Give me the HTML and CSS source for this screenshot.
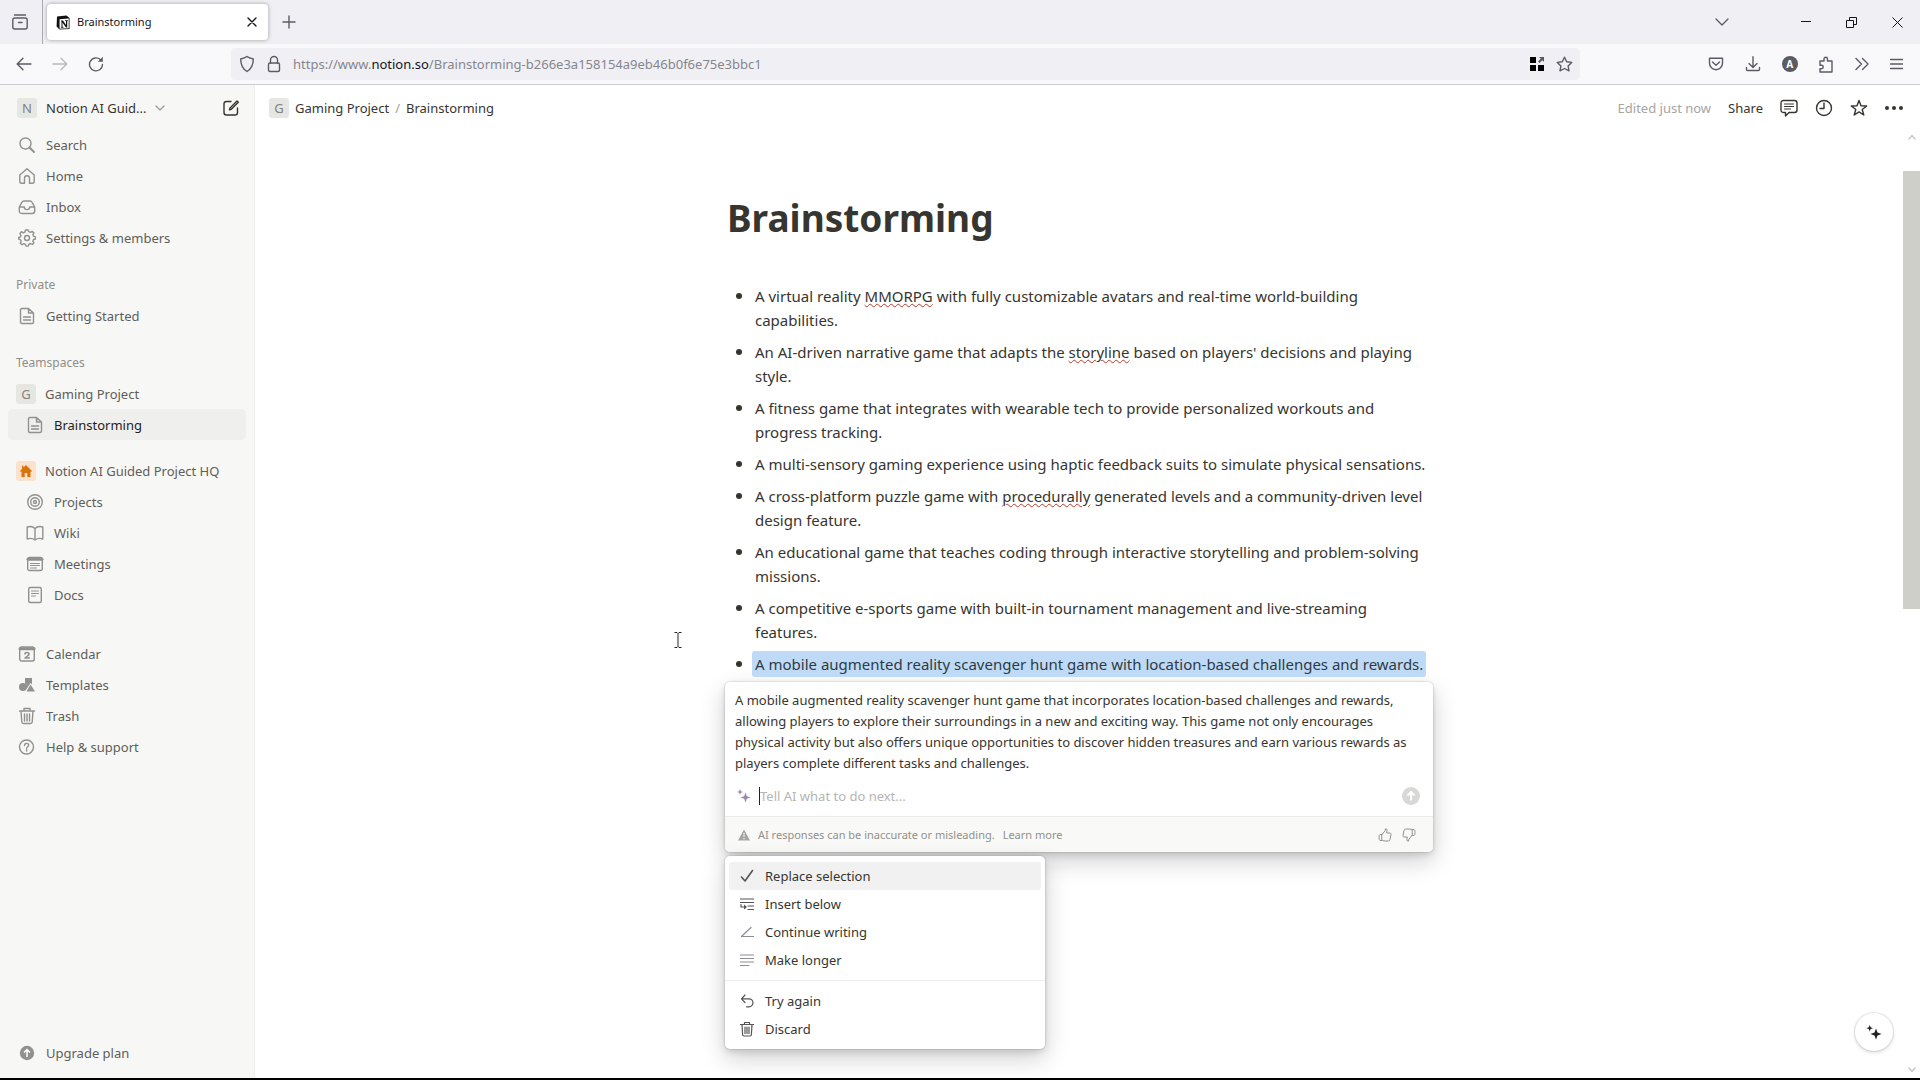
FILE: index.html
```html
<!DOCTYPE html>
<html lang="en">
<head>
<meta charset="utf-8">
<title>Brainstorming</title>
<link rel="stylesheet" href="styles.css">
</head>
<body>
<div class="window">
  <header class="tabbar">
    <button class="tabbar-view" aria-label="Firefox View"><svg class="icon" width="18" height="18" viewBox="0 0 18 18"><rect x="1.800" y="5" width="14.400" height="11" rx="2"/><path d="M3.500 2h11M7.500 9.500h3.500"/></svg></button>
    <div class="tab">
      <svg width="14" height="15" viewBox="0 0 14 15"><path d="M1 1.500 10.500.6 13.500 3v11L3.500 14.500.6 11.500z" fill="#111"/><path d="M3.600 4.200 12.700 3.600v9.600l-9.100.5z" fill="#fff"/><path d="M5 5.500h2l3 4.600V6H9V5.200h2.900V6l-.7.200v6.300H9.900L6.500 7.400v4.400l1 .3v.6H4.900v-.6l.6-.2V6.200H5z" fill="#111"/></svg>
      <span class="tab-title">Brainstorming</span>
      <button aria-label="Close tab"><svg class="icon dark" width="10" height="10" viewBox="0 0 10 10"><path d="m1 1 8 8M9 1 1 9"/></svg></button>
    </div>
    <button class="newtab" aria-label="New tab"><svg class="icon" width="14" height="14" viewBox="0 0 14 14"><path d="M7 1v12M1 7h12"/></svg></button>
    <div class="wincontrols">
      <button aria-label="List all tabs"><svg class="icon" width="14" height="8" viewBox="0 0 14 8"><path d="m1 1 6 6 6-6"/></svg></button>
      <button class="minimize" aria-label="Minimize"><svg class="icon dark thin" width="10" height="10" viewBox="0 0 10 10"><path d="M0 4.500h10"/></svg></button>
      <button aria-label="Restore"><svg class="icon dark thin" width="11" height="11" viewBox="0 0 11 11"><path d="M.5 3.500h7v7h-7zM3.500 3V.5h7v7H8"/></svg></button>
      <button aria-label="Close"><svg class="icon dark thin" width="11" height="11" viewBox="0 0 11 11"><path d="m.5.5 10 10M10.500.5l-10 10"/></svg></button>
    </div>
  </header>

  <nav class="toolbar" aria-label="Browser">
    <div class="navbuttons">
      <button aria-label="Back"><svg class="icon" width="16" height="14" viewBox="0 0 16 14"><path d="M15 7H1.500M7 1.200 1.200 7 7 12.800"/></svg></button>
      <button aria-label="Forward" disabled><svg class="icon" width="16" height="14" viewBox="0 0 16 14"><path d="M1 7h13.500M9 1.200 14.800 7 9 12.800"/></svg></button>
      <button aria-label="Reload"><svg class="icon" width="16" height="16" viewBox="0 0 16 16"><path d="M14.500 8.500a6.500 6.500 0 1 1-2.200-5"/><path d="M14.800.8v5h-5z" fill="currentColor" stroke="none"/></svg></button>
    </div>
    <div class="urlbar">
      <svg class="icon" width="16" height="18" viewBox="0 0 16 18"><path d="M8 1.500c2 1.500 4 2 6.300 2.500 0 6-1.500 9.600-6.300 12.500C3.200 13.600 1.700 10 1.700 4 4 3.500 6 3 8 1.500z"/></svg>
      <svg class="icon" width="14" height="18" viewBox="0 0 14 18"><rect x="1.500" y="8" width="11" height="8.500" rx="1.500"/><path d="M3.500 8V5a3.500 3.500 0 0 1 7 0v3"/></svg>
      <div class="url" role="textbox" aria-label="Address">https://www.<b>notion.so</b>/Brainstorming-b266e3a158154a9eb46b0f6e75e3bbc1</div>
      <svg width="14" height="14" viewBox="0 0 14 14"><path d="M0 0h6v6H0zM0 8h6v6H0zM8 8h6v6H8z"/><path d="M9 0h5v5l-1.700-1.700L9.500 6 8 4.500l2.800-2.700z" fill="#5b5b66"/></svg>
      <svg class="icon" width="17" height="16" viewBox="0 0 17 16"><path d="m8.500 1.200 2.200 4.500 5 .7-3.600 3.500.9 4.900-4.500-2.300L4 14.800l.9-4.900L1.300 6.400l5-.7z"/></svg>
    </div>
    <div class="actions">
      <button aria-label="Pocket"><svg class="icon" width="16" height="16" viewBox="0 0 16 16"><path d="M1.500 2.200h13v5a6.500 6.500 0 0 1-13 0z"/><path d="m4.500 6 3.500 3.200L11.500 6"/></svg></button>
      <button aria-label="Downloads"><svg class="icon" width="16" height="16" viewBox="0 0 16 16"><path d="M8 .8v10.500M4 7.500l4 4 4-4M1.500 11.500v1.800q0 1.200 1.200 1.200h10.600q1.200 0 1.200-1.200v-1.800"/></svg></button>
      <button class="account" aria-label="Account">A</button>
      <button aria-label="Extensions"><svg class="icon" width="16" height="17" viewBox="0 0 16 17"><path d="M2 5h4V3a1.700 1.700 0 0 1 3.500 0v2H14v11H2v-3.200h1.500a1.700 1.700 0 0 0 0-3.500H2z"/></svg></button>
      <button aria-label="More tools"><svg class="icon" width="14" height="14" viewBox="0 0 14 14"><path d="m1 1.500 5.500 5.500L1 12.500M7.500 1.500 13 7l-5.500 5.500"/></svg></button>
      <button aria-label="Menu"><svg class="icon" width="13" height="12" viewBox="0 0 13 12"><path d="M.5 1.500h12M.5 6h12M.5 10.500h12"/></svg></button>
    </div>
  </nav>

  <div class="app">
    <aside class="sidebar">
      <div class="workspace">
        <span class="badge">N</span><span>Notion AI Guid...</span>
        <svg class="icon light" width="10" height="6" viewBox="0 0 10 6"><path d="m1 1 4 4 4-4"/></svg>
        <button class="compose" aria-label="New page"><svg class="icon" width="18" height="18" viewBox="0 0 18 18"><path d="M9 2.500H4.500a2.500 2.500 0 0 0-2.500 2.500v8.500A2.500 2.500 0 0 0 4.500 16H13a2.500 2.500 0 0 0 2.500-2.500V9M7.500 10.800 8 9l7-7 1.300 1.300-7 7z"/></svg></button>
      </div>
      <nav class="nav">
        <a href="#"><svg class="icon" width="18" height="18" viewBox="0 0 18 18"><circle cx="7.500" cy="7.500" r="5.500"/><path d="m11.500 11.500 4.500 4.500" stroke-width="2"/></svg>Search</a>
        <a href="#"><svg class="icon" width="18" height="18" viewBox="0 0 18 18"><path d="M1.800 8 9 1.800 16.200 8v6.500q0 1.800-1.700 1.800h-3v-5a2.500 2.500 0 0 0-5 0v5h-3q-1.700 0-1.700-1.800z"/></svg>Home</a>
        <a href="#"><svg class="icon" width="18" height="18" viewBox="0 0 18 18"><path d="M1.300 9 4 4.200Q4.600 3 6 3h6q1.400 0 2 1.200L16.700 9v4q0 2.500-2.500 2.500H3.800Q1.300 15.500 1.300 13zh5c0 3.500 5.400 3.500 5.400 0h5"/></svg>Inbox</a>
        <a href="#"><svg class="icon" width="18" height="18" viewBox="0 0 18 18"><path d="m7.500 1-.5 2-1.800.8-1.800-1.100-1.500 2L3 6.300 2.400 8l-1.700.5v1.600l1.900.7.6 1.600-1 1.900 1.900 1.400 1.700-1 1.600.7.6 1.700h2.300l.6-1.900 1.600-.7 1.800 1 1.600-1.700-1-1.700.7-1.600 1.800-.5V7.800l-1.900-.6-.6-1.600 1-1.700-1.800-1.500-1.700.9-1.600-.6L10.200 1z"/><circle cx="9" cy="9" r="2.500"/></svg>Settings &amp; members</a>
      </nav>
      <h2>Private</h2>
      <nav class="nav">
        <a href="#"><svg class="icon" width="18" height="18" viewBox="0 0 18 18"><path d="M4 1.500h6.500L15.500 6v9q0 1.500-1.500 1.500H4q-1.500 0-1.500-1.500V3Q2.500 1.500 4 1.500zM10.500 1.500V6h5M5.500 10h7M5.500 13h7"/></svg>Getting Started</a>
      </nav>
      <h2>Teamspaces</h2>
      <nav class="nav">
        <a class="space" href="#"><span class="badge">G</span>Gaming Project</a>
        <a class="child current" href="#"><svg class="icon" width="18" height="18" viewBox="0 0 18 18"><path d="M4 1.500h6.500L15.500 6v9q0 1.500-1.500 1.500H4q-1.500 0-1.500-1.500V3Q2.500 1.500 4 1.500zM10.500 1.500V6h5M5.500 10h7M5.500 13h7"/></svg>Brainstorming</a>
      </nav>
      <nav class="nav project">
        <a class="space" href="#"><span class="badge home"><svg width="12" height="12" viewBox="0 0 12 12"><path d="M6 0 12 6l-.8.9-.7-.6V12H7.300V8H4.700v4H1.500V6.300l-.7.600L0 6l2-2V.8h1.500v1.700z" fill="#d9730d"/></svg></span>Notion AI Guided Project HQ</a>
        <a class="child" href="#"><svg class="icon" width="18" height="18" viewBox="0 0 18 18"><circle cx="9" cy="9" r="7.300"/><circle cx="9" cy="9" r="4.300"/><circle cx="9" cy="9" r="1.500"/></svg>Projects</a>
        <a class="child" href="#"><svg class="icon" width="18" height="18" viewBox="0 0 18 18"><path d="M9 4.500C7 2.500 4 2 1.200 3v12c2.800-1 5.800-.5 7.800 1 2-1.500 5-2 7.800-1V3C14 2 11 2.500 9 4.500zV16"/></svg>Wiki</a>
        <a class="child" href="#"><svg class="icon" width="18" height="18" viewBox="0 0 18 18"><rect x="1.700" y="2.500" width="14.600" height="13" rx="2"/><path d="M2 4.200h14" stroke-width="3"/><path d="M4.500 8.500h9M4.500 10.500h9M4.500 13h6" stroke-width="1"/></svg>Meetings</a>
        <a class="child" href="#"><svg class="icon" width="18" height="18" viewBox="0 0 18 18"><rect x="2.700" y="1.500" width="12.600" height="15" rx="1.500"/><path d="M5.500 5h7M5.500 7.500h7M5.500 10h4" stroke-width="1"/></svg>Docs</a>
      </nav>
      <nav class="nav tools">
        <a href="#"><svg class="icon" width="18" height="18" viewBox="0 0 18 18"><rect x="1.700" y="2" width="14.600" height="14" rx="2"/><path d="M2 3.700h14" stroke-width="3"/><path d="M7 9q0-1.500 2-1.500T11 9q0 1-1.500 2L7 13h4.300" stroke-width="1.600"/></svg>Calendar</a>
        <a href="#"><svg width="18" height="18" viewBox="0 0 18 18" fill="currentColor"><path d="M7 2h7v6.500L12.500 7 9.300 12H9L8.500 9 7 7zM12.500 8.500 17 15.500H8.500z"/><circle cx="5" cy="11" r="4"/></svg>Templates</a>
        <a href="#"><svg class="icon" width="18" height="18" viewBox="0 0 18 18"><path d="M1.500 4h15M6 4V1.500h6V4M3 4l.8 11q.1 1.500 1.700 1.500h7q1.600 0 1.700-1.500L15 4M6.500 7v7M9 7v7M11.500 7v7"/></svg>Trash</a>
        <a href="#"><svg class="icon" width="18" height="18" viewBox="0 0 18 18"><circle cx="8.500" cy="9" r="7"/><path d="M6.500 7.500c0-3 4.200-2.500 4.200-.3 0 1.500-2.100 1.500-2.100 3M8.600 11.800v1.300"/></svg>Help &amp; support</a>
      </nav>
      <nav class="nav upgrade">
        <a href="#"><svg width="18" height="18" viewBox="0 0 18 18"><circle cx="9" cy="9" r="7.200" fill="currentColor"/><path d="M9 13V6M6 8.500 9 5.500l3 3" stroke="#fff" stroke-width="1.500" fill="none"/></svg>Upgrade plan</a>
      </nav>
    </aside>

    <main class="main">
      <div class="topbar">
        <nav class="crumbs" aria-label="Breadcrumb"><span class="badge">G</span><a href="#">Gaming Project</a><span class="sep">/</span><a href="#">Brainstorming</a></nav>
        <div class="topactions">
          <span class="edited">Edited just now</span>
          <button>Share</button>
          <button aria-label="Comments"><svg class="icon" width="18" height="18" viewBox="0 0 18 18"><path d="M3.500 1.500h11q2.500 0 2.500 2.500v7q0 2.500-2.500 2.500H9L5.500 17v-3.500h-2Q1 13.500 1 11V4q0-2.500 2.500-2.500z"/><path d="M4.500 5h9M4.500 7.500h9M4.500 10h6" stroke-width="1"/></svg></button>
          <button aria-label="Updates"><svg class="icon" width="18" height="18" viewBox="0 0 18 18"><circle cx="9" cy="9" r="7.500"/><path d="M9 4v5.500H5"/></svg></button>
          <button aria-label="Favorite"><svg class="icon" width="18" height="18" viewBox="0 0 18 18"><path d="m9 1.500 2 5.300 5.700.2-4.500 3.500 1.600 5.500L9 12.900 4.200 16l1.600-5.500L1.300 7 7 6.800z"/></svg></button>
          <button aria-label="More"><svg width="18" height="18" viewBox="0 0 18 18" fill="currentColor"><circle cx="2" cy="9" r="2"/><circle cx="9" cy="9" r="2"/><circle cx="16" cy="9" r="2"/></svg></button>
        </div>
      </div>

      <div class="scroller">
        <article class="page">
          <h1>Brainstorming</h1>
          <ul class="ideas">
            <li>A virtual reality <span class="typo">MMORPG</span> with fully customizable avatars and real-time world-building capabilities.</li>
            <li>An AI-driven narrative game that adapts the <span class="typo">storyline</span> based on players' decisions and playing style.</li>
            <li>A fitness game that integrates with wearable tech to provide personalized workouts and progress tracking.</li>
            <li>A multi-sensory gaming experience using haptic feedback suits to simulate physical sensations.</li>
            <li>A cross-platform puzzle game with <span class="typo">procedurally</span> generated levels and a community-driven level design feature.</li>
            <li>An educational game that teaches coding through interactive storytelling and problem-solving missions.</li>
            <li>A competitive e-sports game with built-in tournament management and live-streaming features.</li>
            <li><mark>A mobile augmented reality scavenger hunt game with location-based challenges and rewards.</mark></li>
          </ul>

          <section class="ai card">
            <p>A mobile augmented reality scavenger hunt game that incorporates location-based challenges and rewards, allowing players to explore their surroundings in a new and exciting way. This game not only encourages physical activity but also offers unique opportunities to discover hidden treasures and earn various rewards as players complete different tasks and challenges.</p>
            <div class="prompt">
              <svg width="14" height="14" viewBox="0 0 14 14" fill="#9a86ad"><path d="M8.500 3.500 9.800 7.200 13.500 8.500 9.800 9.800 8.500 13.500 7.200 9.800 3.500 8.500 7.200 7.200zM3 0l.8 2.200L6 3l-2.200.8L3 6l-.8-2.200L0 3l2.200-.8z"/></svg>
              <input type="text" aria-label="Tell AI what to do next" placeholder="Tell AI what to do next...">
              <button aria-label="Send"><svg width="18" height="18" viewBox="0 0 18 18"><circle cx="9" cy="9" r="9" fill="#d8d8d6"/><path d="M9 13.500V5.500M5.500 8.500 9 5l3.500 3.500" stroke="#fff" stroke-width="2" fill="none"/></svg></button>
            </div>
            <footer>
              <svg width="12" height="12" viewBox="0 0 12 12"><path d="M6 .5 12 11.500H0z" fill="#a5a5a3"/><path d="M6 4v4M6 9v1.300" stroke="#f9f9f7"/></svg>
              <span>AI responses can be inaccurate or misleading.</span>
              <a href="#">Learn more</a>
              <div class="votes">
                <button aria-label="Good response"><svg class="icon" width="14" height="14" viewBox="0 0 14 14"><path d="M4 6.500 7 3l.5-2.200q1.600-.2 1.600 1.500L8.700 5H12q1.200.2 1 1.500l-1 5q-.2 1.500-1.700 1.500H7q-2 0-3-1zM4 6.500H2Q1 6.500 1 9.500T2 12.500h2"/></svg></button>
                <button aria-label="Bad response"><svg class="icon" width="14" height="14" viewBox="0 0 14 14"><path d="M10 7.500 7 11l-.5 2.200q-1.600.2-1.600-1.500L5.300 9H2Q.8 8.800 1 7.500l1-5Q2.200 1 3.700 1H7q2 0 3 1zM10 7.500h2q1 0 1-3t-1-3h-2"/></svg></button>
              </div>
            </footer>
          </section>

          <div class="menu card" role="menu">
            <div class="group">
              <button class="active" role="menuitem"><svg class="icon" width="14" height="14" viewBox="0 0 14 14"><path d="m1.500 8 3.500 4L12.500 1.500" stroke-width="1.600"/></svg>Replace selection</button>
              <button role="menuitem"><svg class="icon" width="14" height="14" viewBox="0 0 14 14"><path d="M0 2h14M0 5.500h14M8 9h6M8 12.500h6M1 7.500V10h4"/><path d="m4 7.500 3 2.500-3 2.500z" fill="currentColor" stroke="none"/></svg>Insert below</button>
              <button class="soft" role="menuitem"><svg class="icon" width="14" height="14" viewBox="0 0 14 14"><path d="M13.500 11.500H1.500L11 2.500"/></svg>Continue writing</button>
              <button class="soft" role="menuitem"><svg class="icon" width="14" height="14" viewBox="0 0 14 14"><path d="M0 2h14M0 5.500h14M0 9h14M0 12.500h9"/></svg>Make longer</button>
            </div>
            <div class="group">
              <button role="menuitem"><svg class="icon" width="14" height="14" viewBox="0 0 14 14"><path d="M5 1 1.500 4.800 5 8.500M1.500 4.800H9a4 4 0 0 1 0 8H6.500"/></svg>Try again</button>
              <button role="menuitem"><svg class="icon" width="14" height="16" viewBox="0 0 14 16"><path d="M.5 3.500h13M4.500 3.500v-2h5v2M2 3.500l.6 10q.1 1.500 1.400 1.500h6q1.300 0 1.400-1.500l.6-10M5 6v6.500M7 6v6.500M9 6v6.500"/></svg>Discard</button>
            </div>
          </div>
        </article>
        <div class="scrollbar">
          <svg class="icon" width="8" height="6" viewBox="0 0 8 6"><path d="m1 5 3-3.500L7 5"/></svg>
          <div class="track"><div class="thumb"></div></div>
          <svg class="icon" width="8" height="6" viewBox="0 0 8 6"><path d="m1 1 3 3.500L7 1"/></svg>
        </div>
        <button class="fab" aria-label="Ask AI"><svg width="16" height="16" viewBox="0 0 16 16" fill="#222"><path d="M10 4.500 11.500 8.500 15.500 10 11.500 11.500 10 15.500 8.500 11.500 4.500 10 8.500 8.500zM3.700 1l.9 2.300 2.400.9-2.400.9-.9 2.400-.9-2.400L.4 4.200l2.400-.9z"/></svg></button>
        <svg class="cursor" width="8" height="16" viewBox="0 0 8 16"><path d="M.5.5h2.500L4 1.500 5 .5h2.500M.5 15.500h2.500l1-1 1 1h2.500M4 1.500v13" fill="none" stroke="#222"/></svg>
      </div>
    </main>
  </div>
</div>
</body>
</html>
```

FILE: styles.css
```css
* { box-sizing: border-box; }

body {
  margin: 0;
  color: #37352f;
  background: #fff;
  font: 13px/20px "Noto Sans", "Open Sans", sans-serif;
}

button {
  display: flex;
  align-items: center;
  justify-content: center;
  padding: 0;
  border: 0;
  background: none;
  color: inherit;
  font: inherit;
}

a { color: inherit; text-decoration: none; }
svg { flex: none; display: block; }

.icon {
  fill: none;
  stroke: currentColor;
  stroke-width: 1.4;
  stroke-linecap: round;
  stroke-linejoin: round;
}
.icon.dark { color: #15141a; }
.icon.thin { stroke-width: 1; stroke-linecap: butt; stroke-linejoin: miter; }
.icon.light { color: #a0a09c; }

.window {
  display: flex;
  flex-direction: column;
  min-height: 100vh;
  border-bottom: 2px solid #000;
}

/* Browser chrome */
.tabbar {
  display: flex;
  align-items: center;
  height: 44px;
  background: #f0f0f4;
  color: #5b5b66;
}
.tabbar-view {
  width: 43px;
  height: 44px;
  padding-right: 3px;
  border-right: 1px solid #a9a9b2;
}
.tab {
  display: flex;
  align-items: center;
  gap: 7px;
  width: 221px;
  height: 36px;
  margin: 0 14px 0 4px;
  padding: 0 11px 0 9px;
  border-radius: 4px;
  background: #fff;
  box-shadow: 0 0 4px rgba(0, 0, 0, .35);
  color: #15141a;
  font-size: 11px;
}
.tab-title { flex: 1; }
.wincontrols {
  display: flex;
  gap: 35px;
  margin-left: auto;
  padding-right: 17px;
}
.minimize { margin-left: 37px; }

.toolbar {
  display: flex;
  align-items: center;
  height: 41px;
  border-bottom: 1px solid #ccccd0;
  background: #f9f9fb;
  color: #5b5b66;
}
.navbuttons {
  display: flex;
  gap: 20px;
  width: 231px;
  padding-left: 16px;
}
.navbuttons :disabled { color: #b8b8bf; }
.urlbar {
  display: flex;
  flex: 1;
  align-items: center;
  gap: 12px;
  height: 32px;
  padding: 0 7px 0 8px;
  border-radius: 4px;
  background: #f0f0f4;
}
.url {
  flex: 1;
  color: #85858e;
}
.url b { color: #15141a; font-weight: 400; }
.actions {
  display: flex;
  align-items: center;
  justify-content: space-between;
  width: 340px;
  padding: 0 17px 0 128px;
}
.account {
  width: 16px;
  height: 16px;
  border-radius: 50%;
  background: #5b5b66;
  color: #fff;
  font-size: 10px;
  font-weight: 700;
}

/* App layout */
.app { display: flex; flex: 1; }

.sidebar {
  display: flex;
  flex-direction: column;
  width: 255px;
  padding: 7px 8px 10px;
  border-right: 1px solid #eeeeec;
  background: #f7f7f5;
  color: #5f5e5b;
}
.badge {
  display: flex;
  flex: none;
  align-items: center;
  justify-content: center;
  width: 20px;
  height: 20px;
  border-radius: 3px;
  background: #e6e7e3;
  color: #82827e;
}
.badge.home { background: #fbe2cd; }
.workspace {
  display: flex;
  align-items: center;
  gap: 9px;
  height: 32px;
  margin-bottom: 5px;
  padding: 0 6px 0 9px;
  color: #37352f;
}
.compose { margin-left: auto; }
.nav { display: flex; flex-direction: column; }
.nav a {
  display: flex;
  align-items: center;
  gap: 10px;
  height: 31px;
  padding-left: 10px;
  border-radius: 5px;
}
.nav a > svg { color: #91918e; }
.nav a.space { gap: 9px; padding-left: 8px; }
.nav a.child { padding-left: 18px; }
.nav a.current { background: #efefed; color: #1f1e1b; }
.sidebar h2 {
  margin: 22px 8px 5px;
  color: #8f8e8a;
  font-size: 12px;
  font-weight: 400;
  line-height: 20px;
}
.nav.project { margin-top: 15px; }
.nav.tools { margin-top: 28px; }
.nav.upgrade { margin-top: auto; }

.main {
  display: flex;
  flex: 1;
  flex-direction: column;
  min-width: 0;
}
.topbar {
  display: flex;
  align-items: center;
  justify-content: space-between;
  height: 45px;
  padding: 0 17px 0 14px;
}
.crumbs { display: flex; align-items: center; gap: 6px; }
.sep { color: #a0a09c; }
.topactions { display: flex; align-items: center; gap: 17px; }
.edited { color: #a5a5a1; }

.scroller { position: relative; display: flex; flex: 1; }
.page {
  flex: 0 1 708px;
  margin: 0 auto;
  padding: 64px 0 28px;
}
h1 {
  margin: 0 0 42px 2px;
  font-size: 37px;
  line-height: 48px;
}
.ideas {
  display: flex;
  flex-direction: column;
  gap: 8px;
  margin: 0 0 6px;
  padding: 0 3px 0 30px;
  list-style: none;
  font-size: 15px;
  line-height: 24px;
}
.ideas li { position: relative; }
.ideas li::before {
  position: absolute;
  top: 9px;
  left: -19px;
  width: 6px;
  height: 6px;
  border-radius: 50%;
  background: #37352f;
  content: "";
}
.typo { text-decoration: underline wavy #b5392c 1px; text-underline-offset: 1px; }
mark {
  display: inline-block;
  margin: 0 -3px;
  padding: 0 3px;
  border-radius: 3px;
  background: #bfdaf6;
  color: #2e3a45;
  box-shadow: 0 1px #bfdaf6, 0 -1px #bfdaf6;
}

.card {
  border-radius: 5px;
  background: #fff;
  box-shadow: 0 0 1px 1px rgba(15, 15, 15, .08), 0 3px 6px rgba(15, 15, 15, .12), 0 9px 24px rgba(15, 15, 15, .2);
}
.ai { margin-bottom: 4px; overflow: hidden; }
.ai p { margin: 0; padding: 8px 20px 6px 10px; line-height: 21px; }
.prompt {
  display: flex;
  align-items: center;
  gap: 8px;
  height: 36px;
  padding: 0 13px 4px 12px;
}
.prompt input {
  flex: 1;
  height: 18px;
  padding: 0;
  border: 0;
  border-left: 1px solid #222;
  background: none;
  font: inherit;
  outline: 0;
}
.prompt input::placeholder { color: #b5b5b2; opacity: 1; }
.ai footer {
  display: flex;
  align-items: center;
  gap: 8px;
  height: 36px;
  padding: 0 17px 0 13px;
  border-top: 1px solid #ececea;
  background: #f9f9f7;
  color: #91918d;
  font-size: 11px;
}
.votes { display: flex; gap: 10px; margin-left: auto; }
.votes .icon { stroke-width: 1; }

.menu { width: 320px; }
.group { padding: 6px 4px; }
.group + .group { border-top: 1px solid #ececea; }
.menu button {
  justify-content: flex-start;
  gap: 11px;
  width: 100%;
  height: 28px;
  padding-left: 11px;
  border-radius: 3px;
}
.menu button.active { background: #f1f1f1; }
.menu .icon { stroke-width: 1.2; color: #555; }
.menu .soft .icon { color: #8d8d94; }

.scrollbar {
  display: flex;
  flex-direction: column;
  align-items: center;
  width: 17px;
  padding: 4px 0 5px;
  color: #c8c8c4;
}
.track { flex: 1; width: 17px; padding: 31px 0 21px; }
.thumb { height: 438px; background: #cfcfca; }
.fab {
  position: absolute;
  right: 27px;
  bottom: 27px;
  width: 38px;
  height: 38px;
  border-radius: 50%;
  background: #fff;
  box-shadow: 0 0 1px 1px rgba(15, 15, 15, .1), 0 2px 4px rgba(15, 15, 15, .12);
}
.cursor { position: absolute; top: 502px; left: 419px; }
```
